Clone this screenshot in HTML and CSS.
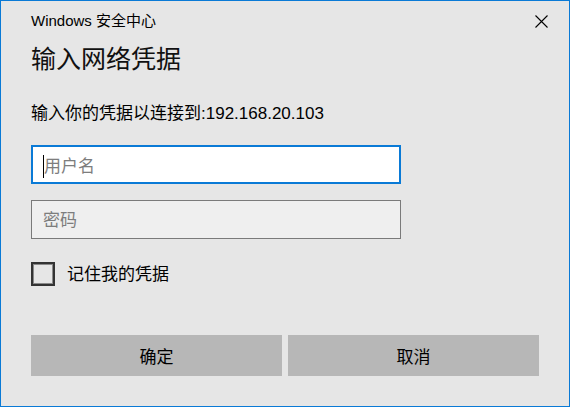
FILE: index.html
```html
<!DOCTYPE html>
<html lang="zh-CN">
<head>
<meta charset="utf-8">
<title>Windows 安全中心</title>
<link rel="stylesheet" href="styles.css">
</head>
<body>
<div class="window">
  <div class="titlebar">
    <span class="title">Windows 安全中心</span>
    <svg class="close" width="13" height="13" viewBox="0 0 13 13" aria-label="关闭">
      <path d="M0.5 0.5 L12.5 12.5 M12.5 0.5 L0.5 12.5" stroke="#000" stroke-width="1.1" fill="none"/>
    </svg>
  </div>
  <div class="content">
    <h1 class="heading">输入网络凭据</h1>
    <p class="desc">输入你的凭据以连接到:192.168.20.103</p>
    <div class="field field-focus"><span class="caret"></span><span class="placeholder">用户名</span></div>
    <div class="field field-pass"><span class="placeholder">密码</span></div>
    <div class="remember">
      <span class="checkbox"></span>
      <span class="remember-label">记住我的凭据</span>
    </div>
    <div class="buttons">
      <div class="btn">确定</div>
      <div class="btn">取消</div>
    </div>
  </div>
</div>
</body>
</html>
```

FILE: styles.css
```css
html, body {
  margin: 0;
  padding: 0;
  background: #e6e6e6;
}
body {
  font-family: "Liberation Sans", "Noto Sans CJK SC", sans-serif;
  color: #000;
}
.window {
  box-sizing: border-box;
  width: 570px;
  height: 407px;
  border: 1px solid #0a7ad6;
  background: #e6e6e6;
  display: flex;
  flex-direction: column;
}
.titlebar {
  display: flex;
  justify-content: space-between;
  align-items: flex-start;
  height: 40px;
  padding: 0 21px 0 30px;
}
.title {
  font-size: 15px;
  line-height: 20px;
  margin-top: 10px;
  color: #000;
}
.close {
  margin-top: 14px;
  display: block;
}
.content {
  padding: 0 30px;
  display: flex;
  flex-direction: column;
}
.heading {
  margin: 0;
  font-size: 25px;
  font-weight: normal;
  line-height: 36px;
  color: #111;
}
.desc {
  margin: 25px 0 0;
  font-size: 17px;
  line-height: 24px;
}
.field {
  box-sizing: border-box;
  width: 370px;
  height: 39px;
  display: flex;
  align-items: center;
  padding-left: 11px;
  font-size: 17px;
  line-height: 22px;
}
.field-focus {
  margin-top: 19px;
  background: #fff;
  border: 2px solid #0a7ad6;
  padding-left: 10px;
  padding-top: 4px;
}
.field-pass {
  margin-top: 16px;
  background: #efefef;
  border: 1px solid #7a7a7a;
  padding-top: 3px;
}
.caret {
  width: 1px;
  height: 23px;
  background: #000;
}
.placeholder {
  color: #7d7d7d;
}
.remember {
  margin-top: 23px;
  height: 24px;
  display: flex;
  align-items: center;
  gap: 12px;
}
.checkbox {
  box-sizing: border-box;
  width: 24px;
  height: 24px;
  border: 2px solid #333;
  box-shadow: inset 0 0 0 1px #8a8a8a;
  background: #e6e6e6;
}
.remember-label {
  font-size: 17px;
  line-height: 22px;
  padding-top: 2px;
}
.buttons {
  margin-top: 49px;
  display: grid;
  grid-template-columns: 1fr 1fr;
  gap: 6px;
}
.btn {
  height: 41px;
  background: #b7b7b7;
  display: flex;
  align-items: center;
  justify-content: center;
  font-size: 17px;
}
```
